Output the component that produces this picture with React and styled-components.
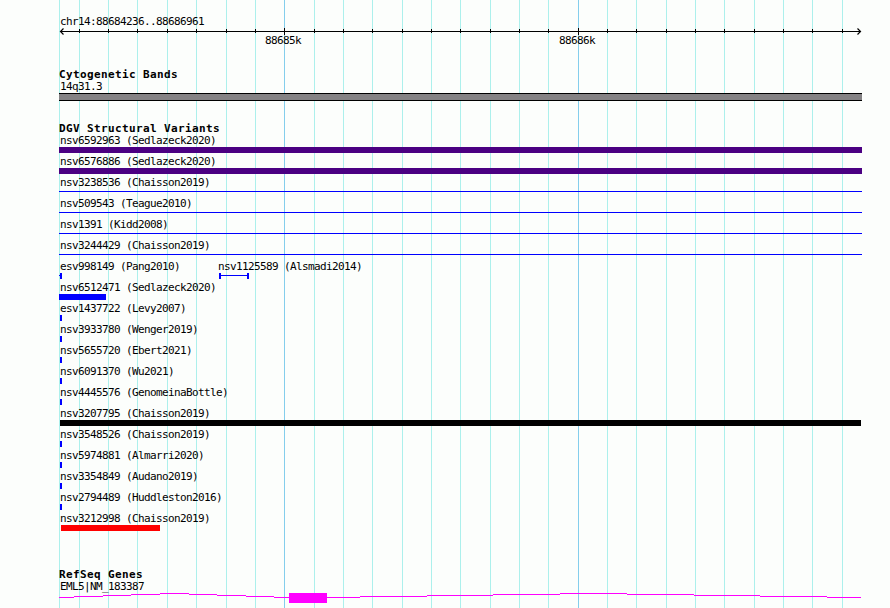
import React from 'react';
import styled, {createGlobalStyle} from 'styled-components';

const LEFT = 59;
const GRID = [59, 79, 108, 137, 167, 196, 226, 255, 284, 314, 343, 372, 402, 431, 460, 490, 519, 548, 578, 607, 636, 666, 695, 724, 754, 783, 812, 842];
const MAJOR = [284, 578];

const gridLayers = GRID.map(x => {
    const color = MAJOR.includes(x) ? '#84ceec' : '#acf0ec';
    return `linear-gradient(${color}, ${color}) ${x}px 0 / 1px 100% no-repeat`;
}).join(', ');

const GlobalStyle = createGlobalStyle`
  body {
    margin: 0;
    background: #fcfefc;
  }
`

const Page = styled.main`
  box-sizing: border-box;
  display: flex;
  flex-direction: column;
  width: 890px;
  height: 608px;
  padding: 16px 28px 0 59px;
  overflow: hidden;
  background: ${gridLayers}, #fcfefc;
  color: #000;
  font-family: "DejaVu Sans Mono", monospace;
`

const Label = styled.div`
  height: 12px;
  padding-left: 1px;
  font-size: 11px;
  line-height: 12px;
  letter-spacing: -0.622px;
  white-space: pre;
`

const Axis = styled.svg`
  display: block;
  width: 803px;
  height: 22px;
  font-size: 11px;
  letter-spacing: -0.622px;
`

const Track = styled.section`
  display: flex;
  flex-direction: column;
  margin-top: ${({$gap}) => $gap}px;
`

const TrackTitle = styled.h2`
  height: 12px;
  margin: 0;
  font-size: 11px;
  font-weight: 700;
  line-height: 12px;
  letter-spacing: 0.378px;
  white-space: pre;
`

const Band = styled.div`
  box-sizing: border-box;
  height: 8px;
  border: solid #000;
  border-width: 1px 0;
  background: #848284;
`

const Row = styled.div`
  display: flex;
  height: 21px;
`

const Feature = styled.div`
  flex: none;
  width: ${({$width}) => $width || 803}px;
`

const Bar = styled.div`
  width: ${({$width}) => $width}px;
  height: 6px;
  margin-left: ${({$offset}) => $offset || 0}px;
  background: ${({$color}) => $color};
`

const Line = styled.div`
  height: 1px;
  margin-top: 2px;
  background: #00f;
`

const Span = styled.div`
  box-sizing: border-box;
  display: flex;
  align-items: flex-start;
  width: ${({$width}) => $width}px;
  height: 6px;
  margin-left: ${({$offset}) => $offset || 0}px;
  border: solid #00f;
  border-width: 0 2px 0 ${({$open}) => $open ? 0 : 2}px;

  &::before {
    content: "";
    flex: 1;
    height: 1px;
    margin-top: 2px;
    background: #00f;
  }
`

const Gene = styled.svg`
  display: block;
  width: 803px;
  height: 15px;
`

const glyphs = {
    purple: <Bar $width={803} $color="#4b0082"/>,
    line: <Line/>,
    tick: <Bar $width={2} $offset={1} $color="#00f"/>,
    blue: <Bar $width={47} $color="#00f"/>,
    black: <Bar $width={801} $offset={1} $color="#000"/>,
    red: <Bar $width={99} $offset={2} $color="#f00"/>,
    openSpan: <Span $width={3} $open/>,
    span: <Span $width={30} $offset={2}/>,
};

const variants = [
    [{name: 'nsv6592963 (Sedlazeck2020)', glyph: 'purple'}],
    [{name: 'nsv6576886 (Sedlazeck2020)', glyph: 'purple'}],
    [{name: 'nsv3238536 (Chaisson2019)', glyph: 'line'}],
    [{name: 'nsv509543 (Teague2010)', glyph: 'line'}],
    [{name: 'nsv1391 (Kidd2008)', glyph: 'line'}],
    [{name: 'nsv3244429 (Chaisson2019)', glyph: 'line'}],
    [
        {name: 'esv998149 (Pang2010)', glyph: 'openSpan', width: 158},
        {name: 'nsv1125589 (Alsmadi2014)', glyph: 'span', width: 200},
    ],
    [{name: 'nsv6512471 (Sedlazeck2020)', glyph: 'blue'}],
    [{name: 'esv1437722 (Levy2007)', glyph: 'tick'}],
    [{name: 'nsv3933780 (Wenger2019)', glyph: 'tick'}],
    [{name: 'nsv5655720 (Ebert2021)', glyph: 'tick'}],
    [{name: 'nsv6091370 (Wu2021)', glyph: 'tick'}],
    [{name: 'nsv4445576 (GenomeinaBottle)', glyph: 'tick'}],
    [{name: 'nsv3207795 (Chaisson2019)', glyph: 'black'}],
    [{name: 'nsv3548526 (Chaisson2019)', glyph: 'tick'}],
    [{name: 'nsv5974881 (Almarri2020)', glyph: 'tick'}],
    [{name: 'nsv3354849 (Audano2019)', glyph: 'tick'}],
    [{name: 'nsv2794489 (Huddleston2016)', glyph: 'tick'}],
    [{name: 'nsv3212998 (Chaisson2019)', glyph: 'red'}],
];

// start, end, height of every step of the intron lines
const introns = [
    [59, 74, 4], [74, 103, 3], [103, 131, 2], [131, 160, 1], [160, 189, 0], [189, 217, 1], [217, 246, 2], [246, 274, 3], [274, 289, 4],
    [327, 360, 4], [360, 427, 3], [427, 493, 2], [493, 560, 1], [560, 627, 0], [627, 694, 1], [694, 760, 2], [760, 827, 3], [827, 861, 4],
];

const Ruler = () => (
    <Axis viewBox="59 28 803 22">
        <g stroke="#000" fill="none" shapeRendering="crispEdges">
            <path d="M60 31.5H861"/>
            {GRID.slice(1).map(x => (
                <path key={x} d={MAJOR.includes(x) ? `M${x + 0.5} 28V35` : `M${x + 0.5} 29V33`}/>
            ))}
        </g>
        <path d="M63.5 28.5L60.5 31.5L63.5 34.5M857.5 28.5L860.5 31.5L857.5 34.5" stroke="#000" strokeWidth="1.2" fill="none"/>
        <text x="265" y="44">88685k</text>
        <text x="559" y="44">88686k</text>
    </Axis>
)

const App = () => (
    <>
        <GlobalStyle/>
        <Page>
            <Label>chr14:88684236..88686961</Label>
            <Ruler/>
            <Track $gap={19}>
                <TrackTitle>Cytogenetic Bands</TrackTitle>
                <Label>14q31.3</Label>
                <Band/>
            </Track>
            <Track $gap={22}>
                <TrackTitle>DGV Structural Variants</TrackTitle>
                {variants.map(row => (
                    <Row key={row[0].name}>
                        {row.map(({name, glyph, width}) => (
                            <Feature key={name} $width={width}>
                                <Label>{name}</Label>
                                {glyphs[glyph]}
                            </Feature>
                        ))}
                    </Row>
                ))}
            </Track>
            <Track $gap={35}>
                <TrackTitle>RefSeq Genes</TrackTitle>
                <Label>EML5|NM_183387</Label>
                <Gene viewBox={`${LEFT} 0 803 15`} fill="#f0f" shapeRendering="crispEdges">
                    {introns.map(([start, end, y]) => (
                        <rect key={start} x={start} y={y} width={end - start} height="1"/>
                    ))}
                    <rect x="289" y="0" width="38" height="10"/>
                </Gene>
            </Track>
        </Page>
    </>
)

export default App;
